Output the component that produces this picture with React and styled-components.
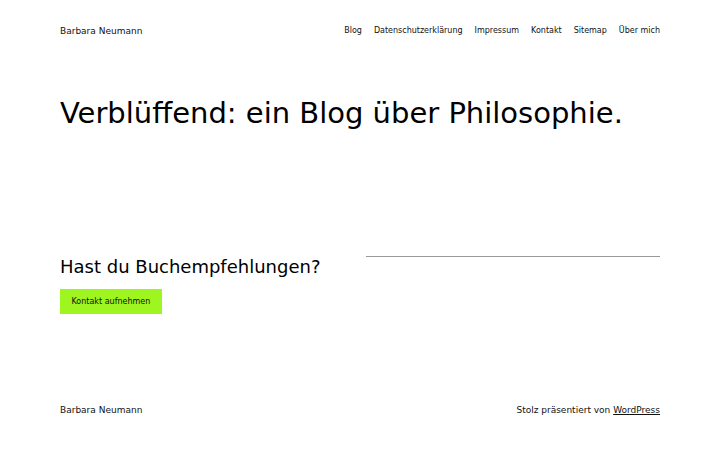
import React from "react";
import styled, { createGlobalStyle } from "styled-components";

const Global = createGlobalStyle`
  html, body { margin: 0; padding: 0; background: #fff; }
  body { font-family: "DejaVu Sans", "Liberation Sans", sans-serif; color: #000; }
  * { box-sizing: border-box; }
`;

const Page = styled.div`
  width: 720px;
  height: 450px;
  padding: 0 60px;
  display: flex;
  flex-direction: column;
`;

const Header = styled.header`
  display: flex;
  justify-content: space-between;
  align-items: center;
  height: 61px;
`;

const SiteTitle = styled.div`
  font-size: 9px;
  color: #111;
`;

const Nav = styled.nav`
  display: flex;
  gap: 12px;
  font-size: 8px;
`;

const NavLink = styled.a`
  color: #111;
  text-decoration: none;
`;

const Hero = styled.h1`
  margin: 35px 0 0;
  font-size: 29px;
  font-weight: 400;
  line-height: 1.2;
`;

const Cta = styled.section`
  margin-top: 125px;
  display: grid;
  grid-template-columns: 1fr 294px;
  column-gap: 12px;
`;

const CtaLeft = styled.div`
  display: flex;
  flex-direction: column;
  align-items: flex-start;
`;

const CtaHeading = styled.h2`
  margin: 0;
  font-size: 18px;
  font-weight: 400;
  line-height: 1.2;
`;

const Button = styled.a`
  margin-top: 12px;
  background: #9ef51f;
  color: #111;
  font-size: 8px;
  padding: 8.5px 11.5px;
  line-height: 8px;
  text-decoration: none;
`;

const Rule = styled.hr`
  margin: 0;
  border: none;
  border-top: 1px solid #999;
  height: 0;
`;

const Footer = styled.footer`
  margin-top: auto;
  height: 45px;
  display: flex;
  justify-content: space-between;
  align-items: flex-start;
  font-size: 9px;
  line-height: 11px;
  color: #111;
`;

const FooterLink = styled.a`
  color: #111;
  text-decoration: underline;
`;

export default function App() {
  const links = ["Blog", "Datenschutzerklärung", "Impressum", "Kontakt", "Sitemap", "Über mich"];
  return (
    <>
      <Global />
      <Page>
        <Header>
          <SiteTitle>Barbara Neumann</SiteTitle>
          <Nav>
            {links.map((l) => (
              <NavLink key={l} href="#">{l}</NavLink>
            ))}
          </Nav>
        </Header>
        <Hero>Verblüffend: ein Blog über Philosophie.</Hero>
        <Cta>
          <CtaLeft>
            <CtaHeading>Hast du Buchempfehlungen?</CtaHeading>
            <Button href="#">Kontakt aufnehmen</Button>
          </CtaLeft>
          <Rule />
        </Cta>
        <Footer>
          <span>Barbara Neumann</span>
          <span>Stolz präsentiert von <FooterLink href="#">WordPress</FooterLink></span>
        </Footer>
      </Page>
    </>
  );
}
